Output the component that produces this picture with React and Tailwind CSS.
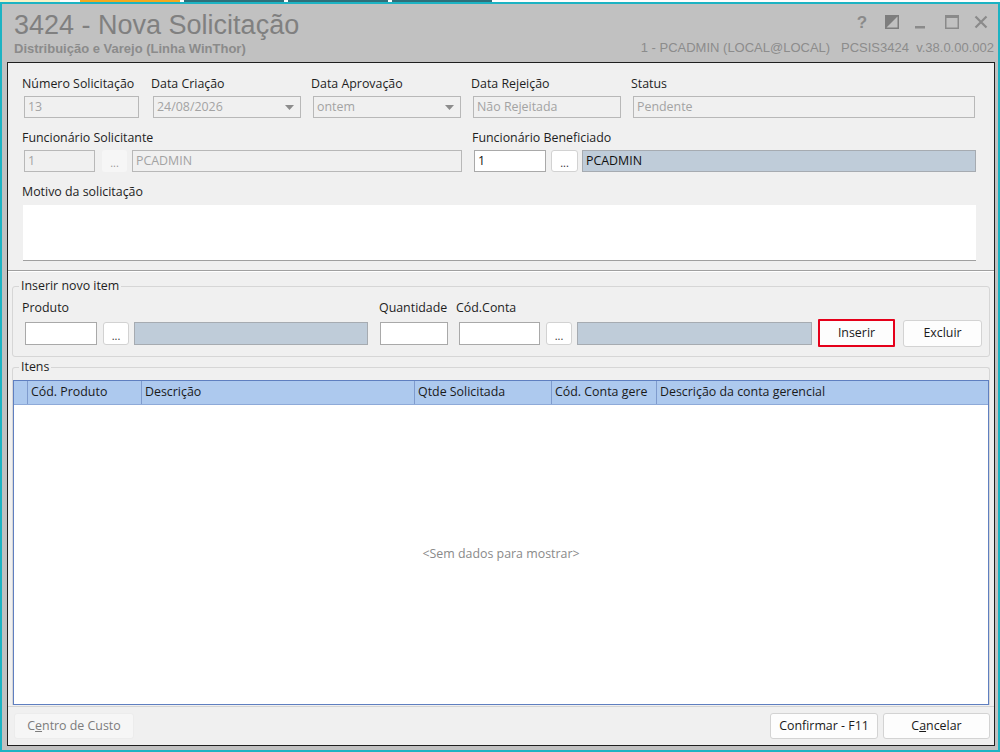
import React from "react";

const font = "font-['Open_Sans','Noto_Sans',sans-serif]";

const kinds = {
  disabled: "bg-[#f0f0f0] border-[#b8b8b8] text-[#a3a3a3]",
  white: "bg-white border-[#a9a9a9] text-[#111111]",
  info: "bg-[#bfccd9] border-[#a6abb1] text-[#111111]",
};

const Label = ({ children, className = "" }) => (
  <div className={`h-[14px] text-[12.4px] leading-[14px] text-[#1e1e1e] whitespace-nowrap ${className}`}>
    {children}
  </div>
);

const Field = ({ kind = "white", className = "", h = "h-[22px]", arrow, children }) => (
  <div
    className={`${h} border flex items-center pl-[3px] pr-[6px] text-[12.4px] leading-none whitespace-nowrap ${kinds[kind]} ${className}`}
  >
    <span>{children}</span>
    {arrow && (
      <svg className="ml-auto" width="9" height="5" viewBox="0 0 9 5">
        <path d="M0 0h9L4.5 5z" fill="#8c8c8c" />
      </svg>
    )}
  </div>
);

const Dots = ({ disabled, className = "", h = "h-[22px]" }) => (
  <div
    className={`${h} rounded-[3px] border flex items-end justify-center pb-[3px] text-[11px] leading-none ${
      disabled ? "bg-[#f6f6f6] border-transparent text-[#9a9a9a]" : "bg-white border-[#d2d2d2] text-[#333333]"
    } ${className}`}
  >
    ...
  </div>
);

const Btn = ({ children, className = "", disabled, red }) => (
  <div
    className={`border flex items-center justify-center text-[12.4px] leading-none ${
      red
        ? "rounded-[1px] border-[2.5px] border-[#e5001a] bg-[#fdfdfd] text-[#1a1a1a]"
        : disabled
        ? "rounded-[3px] bg-[#f6f6f6] border-[#ececec] text-[#7c7c7c]"
        : "rounded-[3px] bg-[#fdfdfd] border-[#d3d3d3] text-[#1a1a1a]"
    } ${className}`}
  >
    {children}
  </div>
);

const TitleIcons = () => (
  <div className="flex items-center h-[18px] text-[#8a8a8a]">
    <span className="font-['Liberation_Sans'] font-bold text-[17px] leading-none w-[12px] text-center">?</span>
    <svg className="ml-[17px]" width="14" height="14" viewBox="0 0 14 14">
      <rect x="0.75" y="0.75" width="12.5" height="12.5" fill="#c0c0c0" stroke="#7d7d7d" strokeWidth="1.5" />
      <path d="M1 1h12L1 13z" fill="#7d7d7d" />
    </svg>
    <svg className="ml-[15px]" width="12" height="14" viewBox="0 0 12 14">
      <rect x="1" y="11" width="10" height="2.5" fill="#8a8a8a" />
    </svg>
    <svg className="ml-[19px]" width="14" height="14" viewBox="0 0 14 14">
      <rect x="0.75" y="0.75" width="12.5" height="12.5" fill="none" stroke="#8a8a8a" strokeWidth="1.5" />
      <rect x="0" y="0" width="14" height="3" fill="#8a8a8a" />
    </svg>
    <svg className="ml-[15px]" width="14" height="14" viewBox="0 0 14 14">
      <path d="M1.5 1.5l11 11M12.5 1.5l-11 11" stroke="#8a8a8a" strokeWidth="2.2" />
    </svg>
  </div>
);

const cols = [
  { w: "w-[14px]", t: "" },
  { w: "w-[114px]", t: "Cód. Produto" },
  { w: "w-[273px]", t: "Descrição" },
  { w: "w-[137px]", t: "Qtde Solicitada" },
  { w: "w-[105px]", t: "Cód. Conta gere" },
];

export default function App() {
  return (
    <div className={`w-[1000px] h-[752px] bg-white overflow-hidden ${font}`}>
      {/* background tabs */}
      <div className="h-[2px] flex">
        <div className="w-[60px] bg-[#f7f3c8]" />
        <div className="w-[20px] bg-white" />
        <div className="w-[100px] bg-[#f4a81e]" />
        <div className="w-[4px] bg-white" />
        <div className="w-[100px] bg-[#2f6f7a]" />
        <div className="w-[4px] bg-white" />
        <div className="w-[100px] bg-[#2f6f7a]" />
        <div className="w-[4px] bg-white" />
        <div className="w-[100px] bg-[#2f6f7a]" />
        <div className="flex-1 bg-white" />
      </div>

      <div className="h-[750px] border-2 border-[#1cb3c3] bg-[#c1c1c1] flex flex-col">
        {/* title area */}
        <div className="h-[58px] flex pl-[12px] pr-[4px]">
          <div className="flex flex-col font-['Liberation_Sans',sans-serif]">
            <div className="mt-[6px] text-[27px] leading-[30px] text-[#808080]">3424 - Nova Solicitação</div>
            <div className="mt-[1px] text-[13px] leading-[16px] font-bold text-[#8b8b8b]">
              Distribuição e Varejo (Linha WinThor)
            </div>
          </div>
          <div className="ml-auto flex flex-col items-end font-['Liberation_Sans',sans-serif]">
            <div className="mt-[9px] mr-[6px]">
              <TitleIcons />
            </div>
            <div className="mt-[9px] text-[13px] leading-[16px] text-[#8c8c8c] whitespace-pre">
              1 - PCADMIN (LOCAL@LOCAL)   PCSIS3424  v.38.0.00.002
            </div>
          </div>
        </div>

        {/* content panel */}
        <div className="ml-[5px] mr-[3px] h-[684px] border border-[#1f1f1f] bg-[#f0f0f0] flex flex-col">
          <div className="pl-[14px] pt-[14px]">
            {/* row 1 */}
            <div className="flex">
              <div className="w-[129px]">
                <Label>Número Solicitação</Label>
                <Field kind="disabled" className="ml-[2px] mt-[5px] w-[115px]">13</Field>
              </div>
              <div className="w-[160px]">
                <Label>Data Criação</Label>
                <Field kind="disabled" arrow className="ml-[2px] mt-[5px] w-[148px]">24/08/2026</Field>
              </div>
              <div className="w-[160px]">
                <Label>Data Aprovação</Label>
                <Field kind="disabled" arrow className="ml-[2px] mt-[5px] w-[148px]">ontem</Field>
              </div>
              <div className="w-[160px]">
                <Label>Data Rejeição</Label>
                <Field kind="disabled" className="ml-[2px] mt-[5px] w-[148px]">Não Rejeitada</Field>
              </div>
              <div>
                <Label>Status</Label>
                <Field kind="disabled" className="ml-[2px] mt-[5px] w-[342px]">Pendente</Field>
              </div>
            </div>

            {/* row 2 */}
            <div className="flex mt-[13px]">
              <div className="w-[450px]">
                <Label>Funcionário Solicitante</Label>
                <div className="flex ml-[2px] mt-[5px]">
                  <Field kind="disabled" className="w-[71px]">1</Field>
                  <Dots disabled className="ml-[7px] w-[25px]" />
                  <Field kind="disabled" className="ml-[5px] w-[330px]">PCADMIN</Field>
                </div>
              </div>
              <div>
                <Label>Funcionário Beneficiado</Label>
                <div className="flex ml-[2px] mt-[5px]">
                  <Field className="w-[72px]">1</Field>
                  <Dots className="ml-[5px] w-[27px]" />
                  <Field kind="info" className="ml-[4px] w-[394px]">PCADMIN</Field>
                </div>
              </div>
            </div>

            {/* row 3 */}
            <div className="mt-[13px]">
              <Label>Motivo da solicitação</Label>
              <div className="ml-[1px] mt-[6px] w-[953px] h-[56px] bg-white border-b border-[#a0a0a0]" />
            </div>
          </div>

          <div className="mt-[9px] border-t border-[#a0a0a0] border-b border-b-white" />

          {/* Inserir novo item */}
          <fieldset className="mx-[4px] mt-[7px] border border-[#d6d6d6] rounded-[3px] pt-[8px] pb-[9px]">
            <legend className="ml-[6px] px-[2px] text-[12.4px] leading-[14px] text-[#1e1e1e]">Inserir novo item</legend>
            <div className="flex pl-[9px]">
              <Label className="w-[357px]">Produto</Label>
              <Label className="w-[77px]">Quantidade</Label>
              <Label>Cód.Conta</Label>
            </div>
            <div className="flex items-center h-[28px] mt-[4px] pl-[12px]">
              <Field className="w-[72px]" h="h-[23px]" />
              <Dots className="ml-[6px] w-[26px]" h="h-[23px]" />
              <Field kind="info" className="ml-[5px] w-[234px]" h="h-[23px]" />
              <Field className="ml-[12px] w-[68px]" h="h-[23px]" />
              <Field className="ml-[11px] w-[81px]" h="h-[23px]" />
              <Dots className="ml-[6px] w-[26px]" h="h-[23px]" />
              <Field kind="info" className="ml-[5px] w-[235px]" h="h-[23px]" />
              <Btn red className="ml-[6px] w-[77px] h-[28px]">Inserir</Btn>
              <Btn className="ml-[8px] w-[79px] h-[27px]">Excluir</Btn>
            </div>
          </fieldset>

          {/* Itens */}
          <fieldset className="mx-[4px] mt-[3px] border border-[#d6d6d6] border-b-0 rounded-t-[3px] pt-[6px]">
            <legend className="ml-[6px] px-[2px] text-[12.4px] leading-[14px] text-[#1e1e1e]">Itens</legend>
            <div className="h-[325px] border border-[#5f7fc0] bg-white flex flex-col">
              <div className="h-[24px] bg-[#adc9ee] border-b border-[#8eaad8] flex text-[12.4px] leading-none text-[#1a1a1a]">
                {cols.map((c, i) => (
                  <div key={i} className={`${c.w} h-full border-r border-[#7f9bcd] flex items-center pl-[3px] whitespace-nowrap overflow-hidden`}>
                    {c.t}
                  </div>
                ))}
                <div className="flex-1 flex items-center pl-[3px] whitespace-nowrap">Descrição da conta gerencial</div>
              </div>
              <div className="flex-1 flex items-center justify-center text-[12.4px] text-[#8a8a8a]">
                &lt;Sem dados para mostrar&gt;
              </div>
            </div>
          </fieldset>

          {/* bottom bar */}
          <div className="mt-[1px] border-t border-[#d4d4d4] flex pt-[6px] pl-[6px] pr-[4px]">
            <Btn disabled className="w-[120px] h-[26px]">
              C<span className="underline">e</span>ntro de Custo
            </Btn>
            <Btn className="ml-auto w-[108px] h-[26px]">Confirmar - F11</Btn>
            <Btn className="ml-[5px] w-[107px] h-[26px]">
              C<span className="underline">a</span>ncelar
            </Btn>
          </div>
        </div>
      </div>
    </div>
  );
}
